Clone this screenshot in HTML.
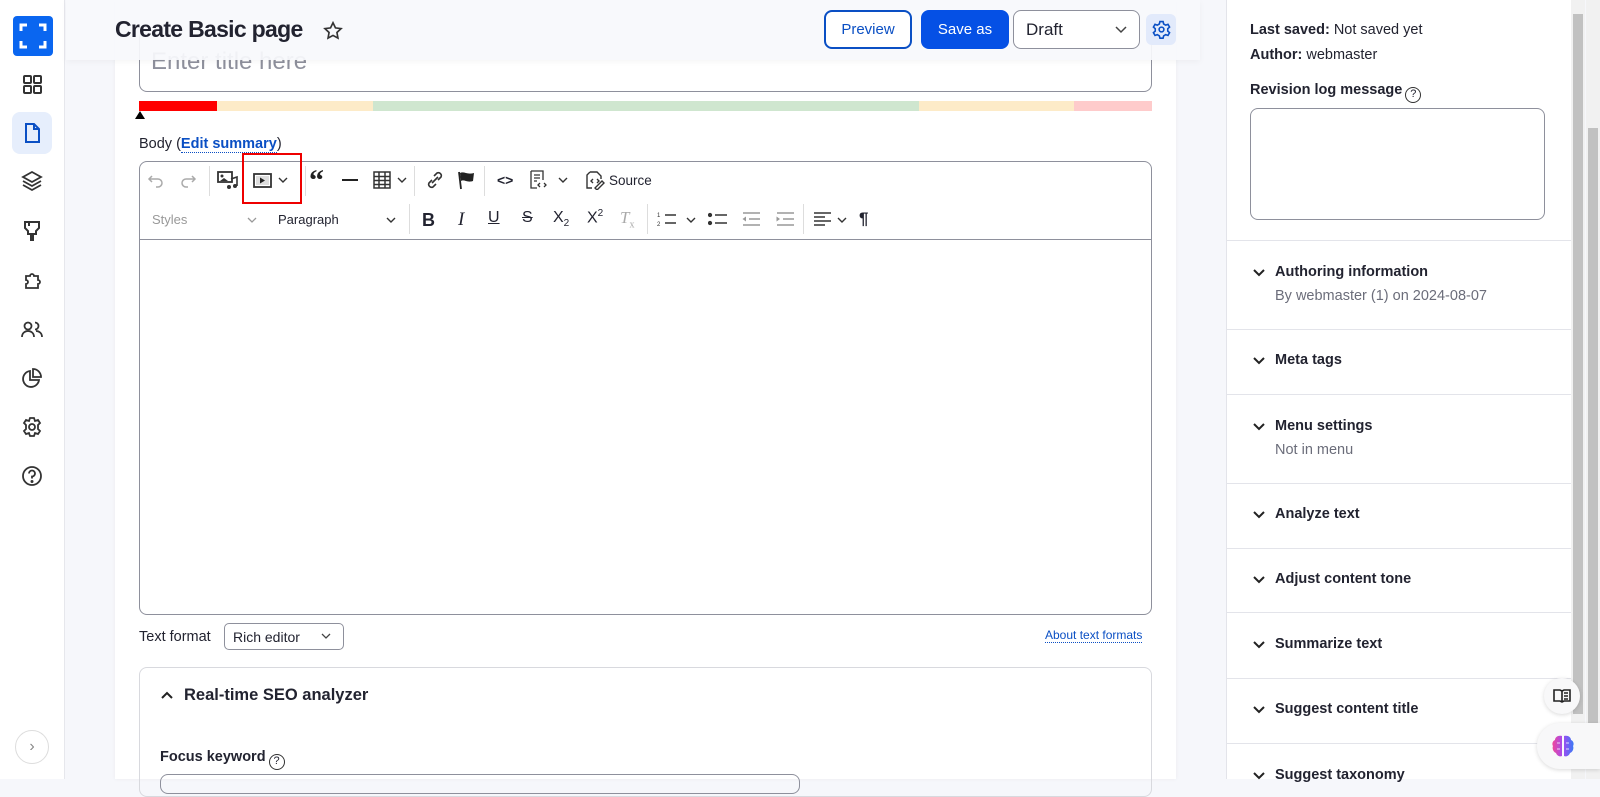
<!DOCTYPE html>
<html><head><meta charset="utf-8"><style>
*{box-sizing:border-box;margin:0;padding:0}
body{width:1600px;height:779px;overflow:hidden;background:#f6f7fb;font-family:"Liberation Sans",sans-serif;color:#222330;position:relative;font-size:14px}
.abs{position:absolute}
.side{left:0;top:0;width:65px;height:779px;background:#fff;border-right:1px solid #e6e7ec}
.sico{position:absolute;left:16px;width:32px;height:32px}
.card{left:115px;top:0;width:1061px;height:779px;background:#fff;box-shadow:0 0 4px rgba(0,0,0,.05)}
.hdr{left:66px;top:0;width:1134px;height:60px;background:rgba(248,249,252,.93);box-shadow:0 2px 6px rgba(0,0,0,.04)}
.btn{position:absolute;top:10px;height:39px;border-radius:8px;font-size:15px;display:flex;align-items:center;justify-content:center}
.tb svg{position:absolute}
.panel{left:1226px;top:0;width:345px;height:779px;background:#fff;border-left:1px solid #e3e4ea}
.sec{position:absolute;left:0;width:345px;border-top:1px solid #e3e4ea}
.st{position:absolute;left:48px;font-size:14.5px;font-weight:600;color:#222330}
.chev{position:absolute;left:25px;width:14px;height:14px}
.sub{position:absolute;left:48px;font-size:14.5px;color:#6b6d7a}
.q{display:inline-block;width:16px;height:16px;border:1.5px solid #333;border-radius:50%;font-size:11px;text-align:center;line-height:13px;vertical-align:-3px;font-weight:normal;margin-left:3px}
</style></head><body>

<div class="abs side">
  <div class="abs" style="left:13px;top:16px;width:40px;height:40px;background:#0a66f0;border-radius:4px">
    <svg width="40" height="40" viewBox="0 0 40 40" fill="none" stroke="#fff" stroke-width="3"><path d="M8 15V9h6M26 9h6v6M32 25v6h-6M14 31H8v-6"/></svg>
  </div>
  <svg class="sico" style="top:68px" viewBox="0 0 32 32" fill="none" stroke="#333" stroke-width="2"><rect x="8" y="8" width="7" height="7" rx="1"/><rect x="18" y="8" width="7" height="7" rx="1"/><rect x="8" y="18" width="7" height="7" rx="1"/><rect x="18" y="18" width="7" height="7" rx="1"/></svg>
  <div class="abs" style="left:12px;top:112px;width:40px;height:42px;background:#e6eefc;border-radius:8px"></div>
  <svg class="sico" style="top:117px" viewBox="0 0 32 32" fill="none" stroke="#0a4fc4" stroke-width="2"><path d="M10 7h8l5 5v13H10z M18 7v5h5"/></svg>
  <svg class="sico" style="top:165px" viewBox="0 0 32 32" fill="none" stroke="#333" stroke-width="1.8"><path d="M16 7l9 5-9 5-9-5z M7 16l9 5 9-5 M7 20l9 5 9-5"/></svg>
  <svg class="sico" style="top:214px" viewBox="0 0 32 32" fill="none" stroke="#333" stroke-width="2"><path d="M9 8h14v6l-3 3v3h-3v6h-2v-6h-3v-3l-3-3z M13 8v4"/></svg>
  <svg class="sico" style="top:264px" viewBox="0 0 32 32" fill="none" stroke="#333" stroke-width="1.8"><path d="M10 12h4a2 2 0 1 1 4 0h4v4a2 2 0 1 1 0 4v4H10v-4a2 2 0 1 0 0-4z"/></svg>
  <svg class="sico" style="top:313px" viewBox="0 0 32 32" fill="none" stroke="#333" stroke-width="1.8"><circle cx="12" cy="13" r="3.5"/><path d="M6 24c0-4 3-6 6-6s6 2 6 6"/><path d="M19 9.5a3.5 3.5 0 1 1 0 7 M20 18c3 0 6 2 6 6"/></svg>
  <svg class="sico" style="top:362px" viewBox="0 0 32 32" fill="none" stroke="#333" stroke-width="1.8"><path d="M14 9a8 8 0 1 0 9 9h-9z M17 7v8h8a8 8 0 0 0-8-8z"/></svg>
  <svg class="sico" style="top:411px" viewBox="0 0 32 32" fill="none" stroke="#333" stroke-width="1.8"><circle cx="16" cy="16" r="3"/><path d="M14 7h4l1 3 3-1 2 3-2 2 0 4 2 2-2 3-3-1-1 3h-4l-1-3-3 1-2-3 2-2v-4l-2-2 2-3 3 1z"/></svg>
  <svg class="sico" style="top:460px" viewBox="0 0 32 32" fill="none" stroke="#333" stroke-width="1.8"><circle cx="16" cy="16" r="9"/><path d="M13 13.5a3 3 0 1 1 3 3v2"/><circle cx="16" cy="21.5" r=".6" fill="#333"/></svg>
  <div class="abs" style="left:15px;top:730px;width:34px;height:34px;border:1px solid #ddd;border-radius:50%;color:#888;font-size:16px;text-align:center;line-height:31px">›</div>
</div>

<div class="abs card">
  <div class="abs" style="left:24px;top:30px;width:1013px;height:62px;border:1px solid #8e909c;border-radius:8px;border-top:none"></div>
  <div class="abs" style="left:36px;top:48px;font-size:24px;color:#8e909c">Enter title here</div>
  <div class="abs" style="left:24px;top:101px;height:10px;width:1013px;display:flex">
    <div style="width:78px;background:#f00"></div><div style="width:156px;background:#fdebc8"></div><div style="width:546px;background:#cfe6cf"></div><div style="width:155px;background:#fdebc8"></div><div style="width:78px;background:#fecbcb"></div>
  </div>
  <div class="abs" style="left:20px;top:111px;width:0;height:0;border-left:5px solid transparent;border-right:5px solid transparent;border-bottom:8px solid #000"></div>
  <div class="abs" style="left:24px;top:136px;font-size:14.5px">Body (<span style="color:#0a4fc4;font-weight:600;border-bottom:1px dotted #0a4fc4">Edit summary</span>)</div>
  <div class="abs" style="left:24px;top:161px;width:1013px;height:454px;border:1px solid #8e909c;border-radius:8px"></div>
  <div class="abs" style="left:24px;top:239px;width:1013px;border-top:1px solid #8e909c"></div>
  <div class="tb abs" style="left:0;top:0">
    <svg style="left:32px;top:172px" width="18" height="16" viewBox="0 0 18 16" fill="none" stroke="#aaa" stroke-width="1.5"><path d="M5 4L2 7l3 3M2 7h9a4 4 0 0 1 0 8H9"/></svg>
    <svg style="left:64px;top:172px" width="18" height="16" viewBox="0 0 18 16" fill="none" stroke="#aaa" stroke-width="1.5"><path d="M13 4l3 3-3 3M16 7H7a4 4 0 0 0 0 8h2"/></svg>
    <div class="abs" style="left:94px;top:166px;height:30px;border-left:1px solid #ddd"></div>
    <svg style="left:102px;top:171px" width="22" height="20" viewBox="0 0 22 20" fill="#333"><rect x="1" y="1" width="14" height="10" fill="none" stroke="#333" stroke-width="1.8"/><circle cx="5" cy="5" r="1.5"/><path d="M3 10l4-3 4 3z"/><path d="M14 8l6-2v9" stroke="#333" stroke-width="1.6" fill="none"/><circle cx="12" cy="16" r="2"/><circle cx="18" cy="15" r="2"/></svg>
    <svg style="left:138px;top:173px" width="20" height="16" viewBox="0 0 20 16"><rect x="1" y="1" width="17" height="13" fill="none" stroke="#333" stroke-width="1.8"/><rect x="3" y="3" width="13" height="9" fill="#ddd"/><path d="M7 4.5v6l5-3z" fill="#222"/></svg>
    <svg style="left:163px;top:176px" width="10" height="8" viewBox="0 0 10 8" fill="none" stroke="#333" stroke-width="1.4"><path d="M1 2l4 4 4-4"/></svg>
    <div class="abs" style="left:127px;top:153px;width:60px;height:51px;border:2px solid #e00"></div>
    <div class="abs" style="left:190px;top:166px;height:30px;border-left:1px solid #ddd"></div>
    <div class="abs" style="left:194px;top:164px;font-size:30px;font-weight:bold;font-family:'Liberation Serif',serif;color:#222">“</div>
    <div class="abs" style="left:227px;top:179px;width:16px;height:2px;background:#222"></div>
    <svg style="left:258px;top:171px" width="18" height="18" viewBox="0 0 18 18" fill="none" stroke="#333" stroke-width="1.5"><rect x="1" y="1" width="16" height="16"/><path d="M1 5.5h16M1 9.5h16M1 13.5h16M6 1v16M12 1v16"/></svg>
    <svg style="left:282px;top:176px" width="10" height="8" viewBox="0 0 10 8" fill="none" stroke="#333" stroke-width="1.4"><path d="M1 2l4 4 4-4"/></svg>
    <div class="abs" style="left:299px;top:166px;height:30px;border-left:1px solid #ddd"></div>
    <svg style="left:311px;top:171px" width="18" height="18" viewBox="0 0 18 18" fill="none" stroke="#333" stroke-width="1.6"><path d="M8 5l3-3a3 3 0 0 1 4 4l-3 3M10 13l-3 3a3 3 0 0 1-4-4l3-3M6 12l6-6"/></svg>
    <svg style="left:342px;top:170px" width="20" height="20" viewBox="0 0 20 20"><path d="M2 2l2 17" stroke="#222" stroke-width="1.8"/><path d="M3 3c4-2 7 2 14 0l-1 8c-6 2-9-2-12 0z" fill="#222"/></svg>
    <div class="abs" style="left:369px;top:166px;height:30px;border-left:1px solid #ddd"></div>
    <div class="abs" style="left:382px;top:172px;font-size:14px;font-weight:bold">&lt;&gt;</div>
    <svg style="left:414px;top:170px" width="20" height="20" viewBox="0 0 20 20" fill="none" stroke="#333" stroke-width="1.3"><path d="M2 1h12v9M2 1v17h6M5 5h6M5 8h6M5 11h3M11 13l-2 2 2 2M15 13l2 2-2 2"/></svg>
    <svg style="left:443px;top:176px" width="10" height="8" viewBox="0 0 10 8" fill="none" stroke="#333" stroke-width="1.4"><path d="M1 2l4 4 4-4"/></svg>
    <svg style="left:470px;top:170px" width="20" height="20" viewBox="0 0 20 20" fill="none" stroke="#333" stroke-width="1.4"><path d="M5 2h7l4 4v3M5 2L2 5v13h5M8 9L6 11l2 2M12 9l2 2-2 2M10 18l7-7 2 2-7 7z"/></svg>
    <div class="abs" style="left:494px;top:173px;font-size:13.5px">Source</div>
    <div class="abs" style="left:37px;top:212px;font-size:13px;color:#999">Styles</div>
    <svg style="left:132px;top:216px" width="10" height="8" viewBox="0 0 10 8" fill="none" stroke="#999" stroke-width="1.3"><path d="M1 2l4 4 4-4"/></svg>
    <div class="abs" style="left:163px;top:212px;font-size:13px">Paragraph</div>
    <svg style="left:271px;top:216px" width="10" height="8" viewBox="0 0 10 8" fill="none" stroke="#333" stroke-width="1.4"><path d="M1 2l4 4 4-4"/></svg>
    <div class="abs" style="left:294px;top:204px;height:30px;border-left:1px solid #ddd"></div>
    <div class="abs" style="left:307px;top:210px;font-size:18px;font-weight:bold">B</div>
    <div class="abs" style="left:343px;top:209px;font-size:19px;font-style:italic;font-family:'Liberation Serif',serif">I</div>
    <div class="abs" style="left:373px;top:209px;font-size:16px;text-decoration:underline">U</div>
    <div class="abs" style="left:407px;top:209px;font-size:16px;text-decoration:line-through">S</div>
    <div class="abs" style="left:438px;top:209px;font-size:16px">X<sub style="font-size:10px">2</sub></div>
    <div class="abs" style="left:472px;top:208px;font-size:16px">X<sup style="font-size:10px">2</sup></div>
    <div class="abs" style="left:505px;top:208px;font-size:17px;font-style:italic;color:#aaa;font-family:'Liberation Serif',serif">T<sub style="font-size:10px;font-style:normal">x</sub></div>
    <div class="abs" style="left:532px;top:204px;height:30px;border-left:1px solid #ddd"></div>
    <svg style="left:542px;top:211px" width="20" height="16" viewBox="0 0 20 16" fill="none" stroke="#333" stroke-width="1.5"><path d="M8 4h11M8 12h11"/><text x="0" y="6" font-size="6" fill="#333" stroke="none">1</text><text x="0" y="15" font-size="6" fill="#333" stroke="none">2</text></svg>
    <svg style="left:571px;top:216px" width="10" height="8" viewBox="0 0 10 8" fill="none" stroke="#333" stroke-width="1.4"><path d="M1 2l4 4 4-4"/></svg>
    <svg style="left:593px;top:211px" width="20" height="16" viewBox="0 0 20 16" fill="none" stroke="#333" stroke-width="1.5"><path d="M7 4h12M7 12h12"/><circle cx="2" cy="4" r="1.4" fill="#333"/><circle cx="2" cy="12" r="1.4" fill="#333"/></svg>
    <svg style="left:626px;top:211px" width="20" height="16" viewBox="0 0 20 16" fill="none" stroke="#999" stroke-width="1.5"><path d="M2 2h17M8 8h11M2 14h17"/><path d="M5 5.5L1.5 8 5 10.5z" fill="#999" stroke="none"/></svg>
    <svg style="left:660px;top:211px" width="20" height="16" viewBox="0 0 20 16" fill="none" stroke="#999" stroke-width="1.5"><path d="M2 2h17M8 8h11M2 14h17"/><path d="M1.5 5.5L5 8 1.5 10.5z" fill="#999" stroke="none"/></svg>
    <div class="abs" style="left:688px;top:204px;height:30px;border-left:1px solid #ddd"></div>
    <svg style="left:698px;top:211px" width="20" height="16" viewBox="0 0 20 16" fill="none" stroke="#333" stroke-width="1.5"><path d="M1 2h17M1 6h11M1 10h17M1 14h11"/></svg>
    <svg style="left:722px;top:216px" width="10" height="8" viewBox="0 0 10 8" fill="none" stroke="#333" stroke-width="1.4"><path d="M1 2l4 4 4-4"/></svg>
    <div class="abs" style="left:744px;top:209px;font-size:17px;font-weight:bold">¶</div>
  </div>
  <div class="abs" style="left:24px;top:629px;font-size:14.5px">Text format</div>
  <div class="abs" style="left:109px;top:623px;width:120px;height:27px;border:1px solid #8e909c;border-radius:5px;font-size:14px;padding:5px 0 0 8px">Rich editor</div>
  <svg class="abs" style="left:206px;top:632px" width="10" height="8" viewBox="0 0 10 8" fill="none" stroke="#444" stroke-width="1.3"><path d="M1 2l4 4 4-4"/></svg>
  <div class="abs" style="left:930px;top:628px;font-size:12px;color:#0a4fc4;border-bottom:1px dotted #0a4fc4">About text formats</div>
  <div class="abs" style="left:24px;top:667px;width:1013px;height:130px;border:1px solid #d8d9de;border-radius:8px"></div>
  <svg class="abs" style="left:45px;top:690px" width="14" height="10" viewBox="0 0 14 10" fill="none" stroke="#222" stroke-width="2"><path d="M2 8l5-5 5 5"/></svg>
  <div class="abs" style="left:69px;top:686px;font-size:16.5px;font-weight:600">Real-time SEO analyzer</div>
  <div class="abs" style="left:45px;top:749px;font-size:14.5px;font-weight:600">Focus keyword<span class="q">?</span></div>
  <div class="abs" style="left:45px;top:774px;width:640px;height:20px;border:1px solid #8e909c;border-radius:8px"></div>
</div>

<div class="abs hdr">
  <div class="abs" style="left:49px;top:16px;font-size:23px;font-weight:600;letter-spacing:-.7px">Create Basic page</div>
  <svg class="abs" style="left:256px;top:20px" width="22" height="22" viewBox="0 0 24 24" fill="none" stroke="#333" stroke-width="1.8"><path d="M12 3l2.7 5.6 6.1.8-4.5 4.2 1.1 6.1L12 16.8 6.6 19.7l1.1-6.1L3.2 9.4l6.1-.8z"/></svg>
  <div class="btn" style="left:758px;width:88px;border:2px solid #0a4fc4;color:#0a4fc4;background:#fff">Preview</div>
  <div class="btn" style="left:855px;width:88px;background:#0550e5;color:#fff">Save as</div>
  <div class="btn" style="left:947px;width:127px;border:1px solid #8e909c;background:#fff;justify-content:flex-start;padding-left:12px;font-size:17px">Draft</div>
  <svg class="abs" style="left:1048px;top:25px" width="14" height="10" viewBox="0 0 14 10" fill="none" stroke="#444" stroke-width="1.5"><path d="M2 2l5 5 5-5"/></svg>
  <div class="abs" style="left:1080px;top:14px;width:30px;height:31px;background:#e2eafb;border-radius:6px"></div>
  <svg class="abs" style="left:1086px;top:20px" width="19" height="19" viewBox="0 0 24 24" fill="none" stroke="#0a4fc4" stroke-width="2"><circle cx="12" cy="12" r="3"/><path d="M10 2h4l.7 3 2.6 1.5 2.9-1 2 3.5-2.3 2v3l2.3 2-2 3.5-2.9-1-2.6 1.5-.7 3h-4l-.7-3-2.6-1.5-2.9 1-2-3.5 2.3-2v-3l-2.3-2 2-3.5 2.9 1L9.3 5z"/></svg>
</div>

<div class="abs panel">
  <div class="abs" style="left:23px;top:22px;font-size:14.5px"><b style="font-weight:600">Last saved:</b> Not saved yet</div>
  <div class="abs" style="left:23px;top:47px;font-size:14.5px"><b style="font-weight:600">Author:</b> webmaster</div>
  <div class="abs" style="left:23px;top:82px;font-size:14.5px;font-weight:600">Revision log message<span class="q">?</span></div>
  <div class="abs" style="left:23px;top:108px;width:295px;height:112px;border:1px solid #8e909c;border-radius:8px"></div>
  <div class="sec" style="top:240px"></div>
  <svg class="chev" style="top:266px" viewBox="0 0 14 14" fill="none" stroke="#222" stroke-width="2"><path d="M2 4l5 5 5-5"/></svg>
  <div class="st" style="top:264px">Authoring information</div>
  <div class="sub" style="top:288px">By webmaster (1) on 2024-08-07</div>
  <div class="sec" style="top:329px"></div>
  <svg class="chev" style="top:354px" viewBox="0 0 14 14" fill="none" stroke="#222" stroke-width="2"><path d="M2 4l5 5 5-5"/></svg>
  <div class="st" style="top:352px">Meta tags</div>
  <div class="sec" style="top:394px"></div>
  <svg class="chev" style="top:420px" viewBox="0 0 14 14" fill="none" stroke="#222" stroke-width="2"><path d="M2 4l5 5 5-5"/></svg>
  <div class="st" style="top:418px">Menu settings</div>
  <div class="sub" style="top:442px">Not in menu</div>
  <div class="sec" style="top:483px"></div>
  <svg class="chev" style="top:508px" viewBox="0 0 14 14" fill="none" stroke="#222" stroke-width="2"><path d="M2 4l5 5 5-5"/></svg>
  <div class="st" style="top:506px">Analyze text</div>
  <div class="sec" style="top:548px"></div>
  <svg class="chev" style="top:573px" viewBox="0 0 14 14" fill="none" stroke="#222" stroke-width="2"><path d="M2 4l5 5 5-5"/></svg>
  <div class="st" style="top:571px">Adjust content tone</div>
  <div class="sec" style="top:612px"></div>
  <svg class="chev" style="top:638px" viewBox="0 0 14 14" fill="none" stroke="#222" stroke-width="2"><path d="M2 4l5 5 5-5"/></svg>
  <div class="st" style="top:636px">Summarize text</div>
  <div class="sec" style="top:678px"></div>
  <svg class="chev" style="top:703px" viewBox="0 0 14 14" fill="none" stroke="#222" stroke-width="2"><path d="M2 4l5 5 5-5"/></svg>
  <div class="st" style="top:701px">Suggest content title</div>
  <div class="sec" style="top:743px"></div>
  <svg class="chev" style="top:769px" viewBox="0 0 14 14" fill="none" stroke="#222" stroke-width="2"><path d="M2 4l5 5 5-5"/></svg>
  <div class="st" style="top:767px">Suggest taxonomy</div>
</div>

<div class="abs" style="left:1571px;top:0;width:14px;height:779px;background:#f1f1f1"></div>
<div class="abs" style="left:1573px;top:14px;width:10px;height:700px;background:#c1c1c1"></div>
<div class="abs" style="left:1586px;top:0;width:14px;height:779px;background:#f1f1f1"></div>
<div class="abs" style="left:1588px;top:128px;width:10px;height:634px;background:#c1c1c1"></div>

<div class="abs" style="left:1544px;top:678px;width:36px;height:36px;border-radius:50%;background:#f8f8f9;box-shadow:0 1px 4px rgba(0,0,0,.15)"></div>
<svg class="abs" style="left:1553px;top:688px" width="18" height="16" viewBox="0 0 18 16" fill="none" stroke="#222" stroke-width="1.6"><path d="M1 2h6l2 1 2-1h6v11h-6l-2 1-2-1H1zM9 3v11M11 5h4M11 8h4M11 11h4"/></svg>
<div class="abs" style="left:1537px;top:723px;width:63px;height:46px;border-radius:23px 0 0 23px;background:#f8f8f9;box-shadow:0 1px 4px rgba(0,0,0,.15)"></div>
<svg class="abs" style="left:1550px;top:733px" width="26" height="26" viewBox="0 0 26 26"><defs><linearGradient id="g" x1="0" x2="1"><stop offset="0" stop-color="#f0479a"/><stop offset=".5" stop-color="#a24cf0"/><stop offset="1" stop-color="#3a7af5"/></linearGradient></defs><path d="M12 3C7 2 5 5 5 7 2 8 2 12 3 13c-1 2 0 6 3 7 1 3 4 4 6 3zM14 3c5-1 7 2 7 4 3 1 3 5 2 6 1 2 0 6-3 7-1 3-4 4-6 3z" fill="url(#g)"/><path d="M7 10h3M16 10h3M7 16h3M16 16h3M13 3v20" stroke="#fff" stroke-width=".8"/></svg>

</body></html>
